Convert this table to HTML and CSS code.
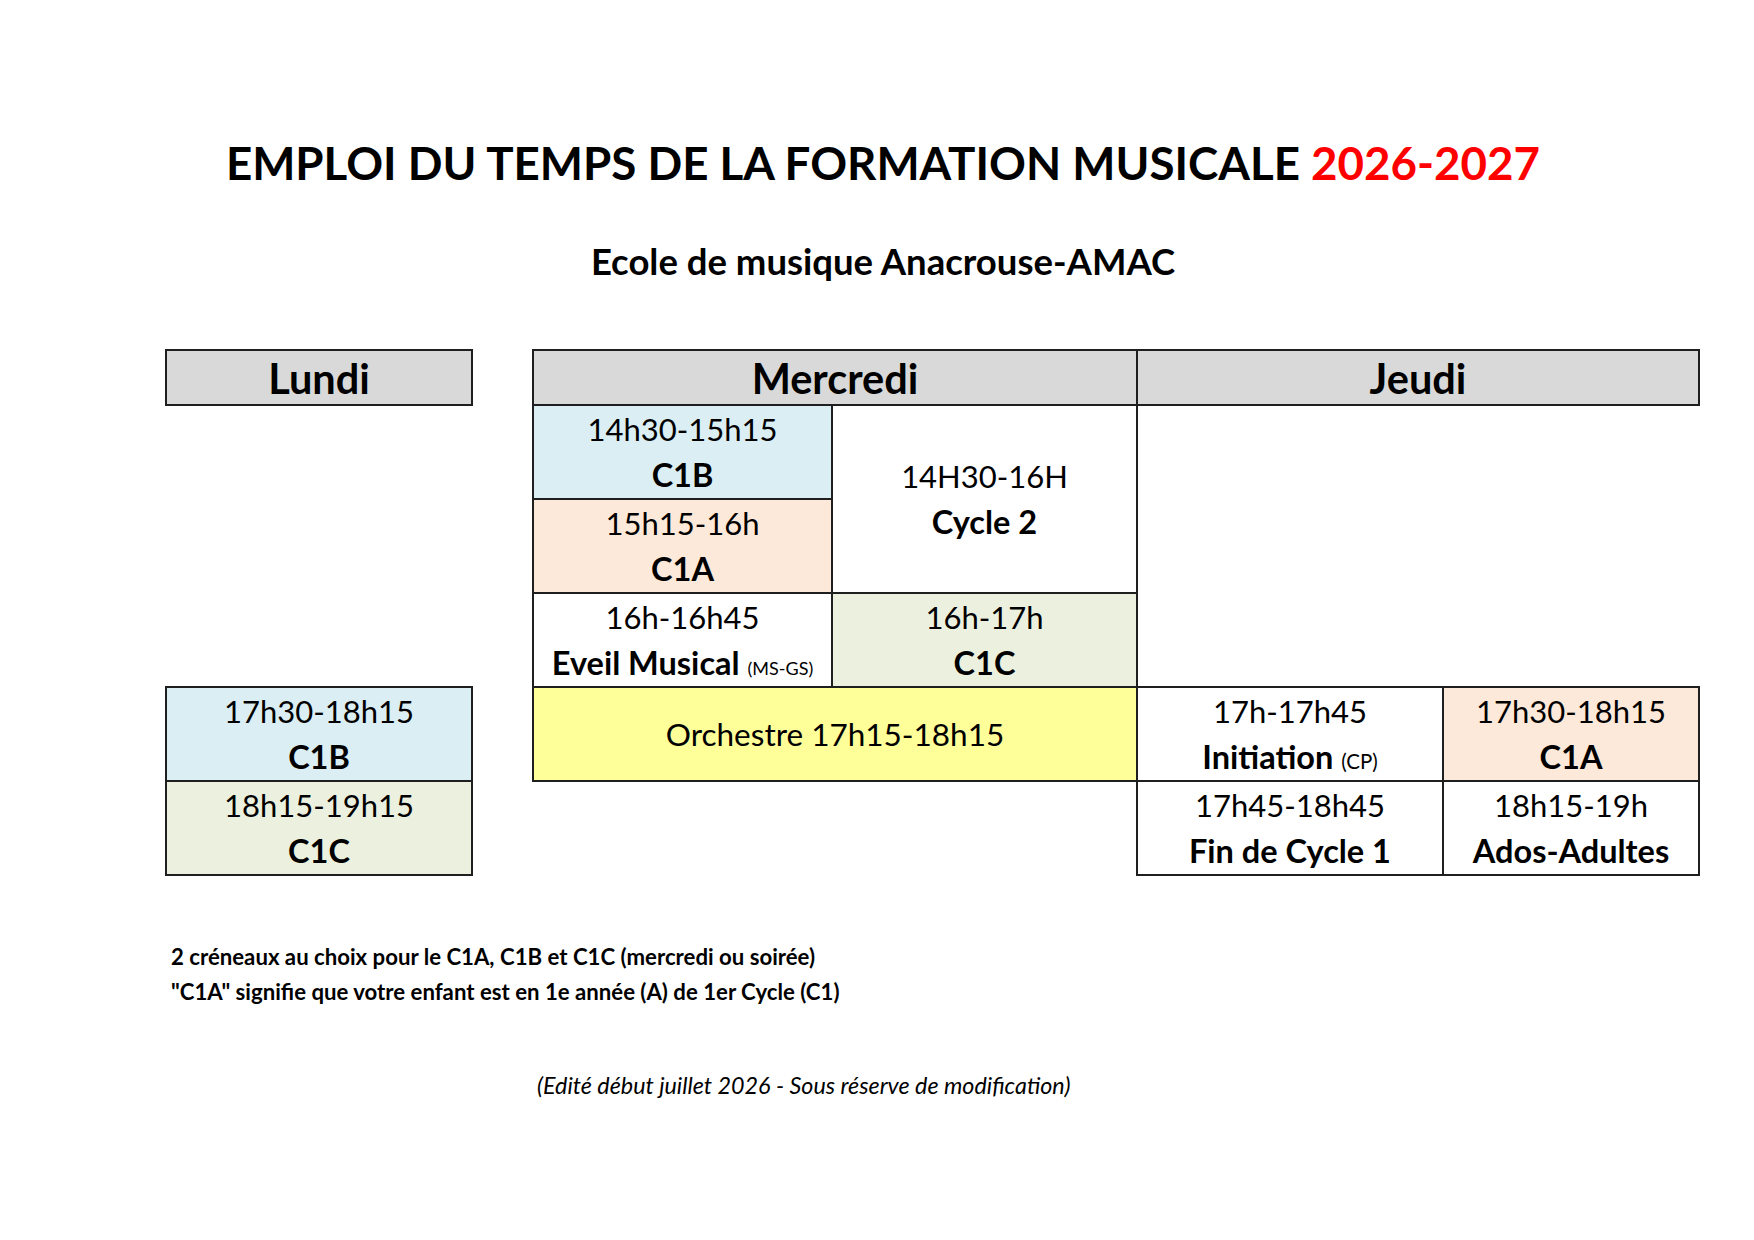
FILE: index.html
```html
<!DOCTYPE html>
<html lang="fr">
<head>
<meta charset="utf-8">
<title>Emploi du temps de la formation musicale 2026-2027</title>
<link rel="stylesheet" href="styles.css">
</head>
<body>
<div class="page">
  <header class="head">
    <h1 class="title">EMPLOI DU TEMPS DE LA FORMATION MUSICALE <span class="year">2026-2027</span></h1>
    <h2 class="subtitle">Ecole de musique Anacrouse-AMAC</h2>
  </header>

  <table class="schedule">
    <colgroup>
      <col class="col-lundi">
      <col class="col-gap">
      <col class="col-m1">
      <col class="col-m2">
      <col class="col-j1">
      <col class="col-j2">
    </colgroup>
    <tr class="row-head">
      <th class="day">Lundi</th>
      <td class="empty" rowspan="6"></td>
      <th class="day" colspan="2">Mercredi</th>
      <th class="day" colspan="2">Jeudi</th>
    </tr>
    <tr class="row">
      <td class="empty" rowspan="3"></td>
      <td class="slot blue"><span class="time">14h30-15h15</span><span class="label">C1B</span></td>
      <td class="slot" rowspan="2"><span class="time">14H30-16H</span><span class="label">Cycle 2</span></td>
      <td class="empty" colspan="2" rowspan="3"></td>
    </tr>
    <tr class="row">
      <td class="slot peach"><span class="time">15h15-16h</span><span class="label">C1A</span></td>
    </tr>
    <tr class="row">
      <td class="slot"><span class="time">16h-16h45</span><span class="label">Eveil Musical <span class="small">(MS-GS)</span></span></td>
      <td class="slot green"><span class="time">16h-17h</span><span class="label">C1C</span></td>
    </tr>
    <tr class="row">
      <td class="slot blue"><span class="time">17h30-18h15</span><span class="label">C1B</span></td>
      <td class="slot yellow" colspan="2"><span class="time orch">Orchestre 17h15-18h15</span></td>
      <td class="slot"><span class="time">17h-17h45</span><span class="label">Initiation <span class="small cp">(CP)</span></span></td>
      <td class="slot peach"><span class="time">17h30-18h15</span><span class="label">C1A</span></td>
    </tr>
    <tr class="row">
      <td class="slot green"><span class="time">18h15-19h15</span><span class="label">C1C</span></td>
      <td class="empty" colspan="2"></td>
      <td class="slot"><span class="time">17h45-18h45</span><span class="label">Fin de Cycle 1</span></td>
      <td class="slot"><span class="time">18h15-19h</span><span class="label">Ados-Adultes</span></td>
    </tr>
  </table>

  <div class="notes">
    <p>2 créneaux au choix pour le C1A, C1B et C1C (mercredi ou soirée)</p>
    <p>"C1A" signifie que votre enfant est en 1e année (A) de 1er Cycle (C1)</p>
  </div>

  <p class="edit">(Edité début juillet 2026 - Sous réserve de modification)</p>
</div>
</body>
</html>
```

FILE: styles.css
```css
html, body {
  margin: 0;
  padding: 0;
  background: #ffffff;
}

body {
  font-family: Lato, "Liberation Sans", sans-serif;
  color: #000000;
}

.page {
  width: 1754px;
  height: 1240px;
  display: flex;
  flex-direction: column;
}

.head {
  padding-left: 12px;
  padding-top: 136px;
  text-align: center;
}

.title {
  margin: 0;
  font-size: 45.7px;
  line-height: 53px;
  font-weight: 700;
}

.year {
  color: #ff0000;
}

.subtitle {
  margin: 51px 0 0 0;
  font-size: 36.5px;
  line-height: 43px;
  font-weight: 700;
}

.schedule {
  margin: 66px 0 0 165px;
  border-collapse: collapse;
  table-layout: fixed;
  width: 1535px;
}

.col-lundi { width: 306px; }
.col-gap { width: 61px; }
.col-m1 { width: 299px; }
.col-m2 { width: 305px; }
.col-j1 { width: 306px; }
.col-j2 { width: 256px; }

.row-head { height: 55px; }
.row { height: 94px; }

.day {
  background: #d9d9d9;
  border: 2px solid #1f1f1f;
  font-size: 41.5px;
  font-weight: 700;
  line-height: 46px;
  padding: 0;
  text-align: center;
  vertical-align: middle;
}

.empty {
  border: none;
  padding: 0;
}

.slot {
  border: 2px solid #1f1f1f;
  padding: 0;
  text-align: center;
  vertical-align: middle;
  font-size: 31px;
  line-height: 45px;
  white-space: nowrap;
}

.time {
  display: block;
  font-weight: 400;
}

.time.orch {
  font-size: 31.5px;
}

.label {
  display: block;
  font-size: 32.5px;
  font-weight: 700;
}

.small {
  font-size: 18px;
  line-height: 18px;
  font-weight: 400;
}

.small.cp {
  font-size: 20.5px;
  line-height: 20px;
}

.blue { background: #daeef3; }
.peach { background: #fde9d9; }
.green { background: #ebf1de; }
.yellow { background: #ffff99; }

.notes {
  margin: 63px 0 0 171px;
}

.notes p {
  margin: 0;
  font-size: 22.2px;
  line-height: 35px;
  font-weight: 700;
}

.edit {
  margin: 61px 0 0 537px;
  font-size: 23.3px;
  line-height: 30px;
  font-style: italic;
}
```
